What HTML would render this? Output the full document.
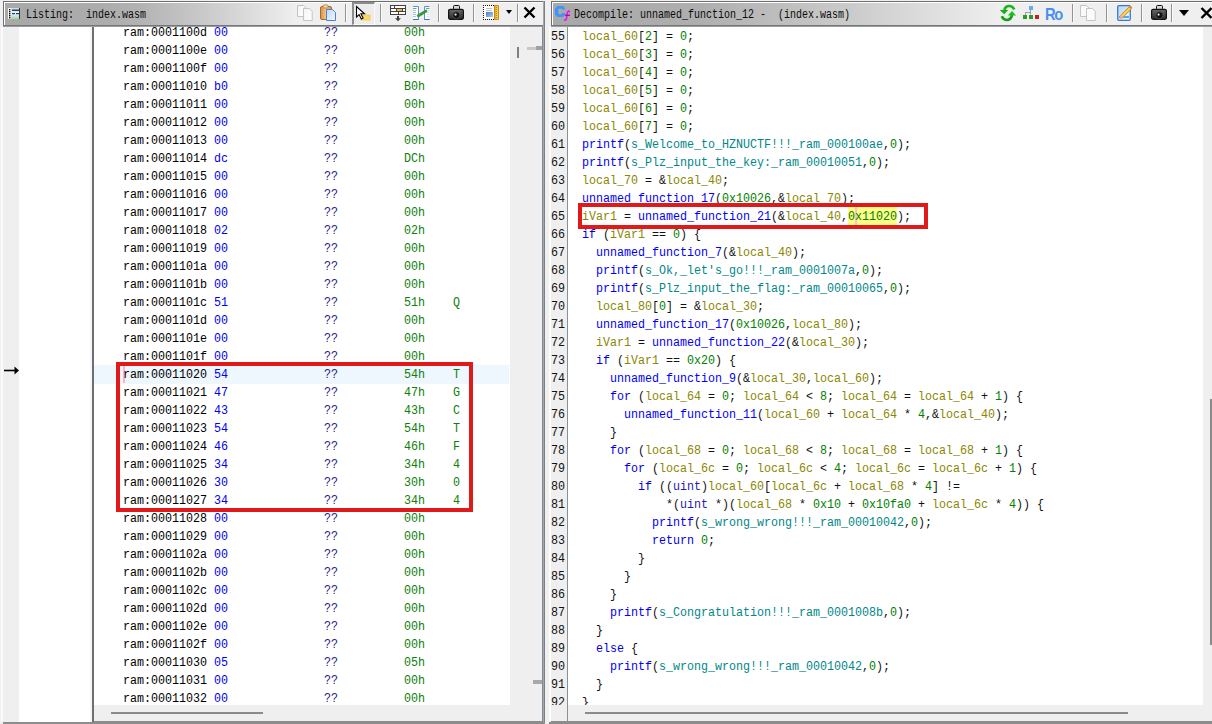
<!DOCTYPE html>
<html><head><meta charset="utf-8">
<style>
*{margin:0;padding:0;box-sizing:border-box}
html,body{width:1212px;height:724px;overflow:hidden;background:#f0f0f0;position:relative}
.abs{position:absolute}
/* title bars */
.tb{position:absolute;height:25px;border:1px solid #6f6f6f;border-bottom:none;}
.tbin{position:absolute;left:0;top:0;right:0;bottom:0;border-top:1px solid #fff;border-left:1px solid #fff}
.tt{position:absolute;top:0;font-family:"Liberation Mono",monospace;font-size:12px;line-height:24px;color:#0a0a0a;white-space:pre;transform:scaleX(0.8333);transform-origin:0 0}
.sep{position:absolute;top:4px;width:1px;height:18px;background:#939393;box-shadow:1px 0 0 #fbfbfb}
/* listing */
.lr{position:absolute;left:0;height:18px;width:510px}
.lr span{position:absolute;top:0;font-family:"Liberation Mono",monospace;font-size:12px;line-height:18px;white-space:pre;transform:scaleX(0.9722);transform-origin:0 0}
.ad{color:#000}
.by{color:#0000f0}
.mn{color:#26208c}
.op{color:#0c800c}
/* code */
.cr{position:absolute;height:18px;font-family:"Liberation Mono",monospace;font-size:12px;line-height:18px;white-space:pre;color:#111;transform:scaleX(0.9722);transform-origin:0 0}
.k{color:#0000e6}
.f{color:#0000ff}
.v{color:#8a8600}
.c{color:#008000}
.g{color:#008787}
.t{color:#2a1ab0}
.ln{position:absolute;left:551px;height:18px;font-family:"Liberation Mono",monospace;font-size:12px;line-height:18px;color:#111;white-space:pre;transform:scaleX(0.9722);transform-origin:0 0}
</style></head><body>

<!-- ================= LEFT PANEL (Listing) ================= -->
<!-- title bar -->
<div class="abs" style="left:3px;top:1px;width:542px;height:25px;background:linear-gradient(to right,#a8a8a8 0px,#acacac 97px,#b3b3b3 137px,#d0d0d0 217px,#eeeeee 290px,#efefef 290px,#efefef 100%);border-top:1px solid #6f6f6f;border-left:1px solid #6f6f6f;border-right:1px solid #6f6f6f"></div>
<div class="abs" style="left:4px;top:2px;width:540px;height:1px;background:#fff"></div>
<div class="abs" style="left:4px;top:2px;width:1px;height:23px;background:#fff"></div>
<div class="abs" style="left:3px;top:25px;width:542px;height:1px;background:#767676"></div><div class="abs" style="left:3px;top:26px;width:542px;height:1px;background:#9a9ea2"></div>
<!-- listing icon -->
<svg class="abs" style="left:8px;top:8px" width="12" height="11" viewBox="0 0 12 11">
<defs><linearGradient id="li" x1="0" y1="0" x2="0" y2="1"><stop offset="0" stop-color="#c8e8c8"/><stop offset="0.5" stop-color="#e8f4ff"/><stop offset="1" stop-color="#a8d0a8"/></linearGradient></defs>
<rect x="0" y="0" width="12" height="11" fill="url(#li)"/>
<rect x="0" y="0" width="3" height="11" fill="#fafafa"/>
<rect x="1" y="1" width="1.4" height="1.4" fill="#000"/><rect x="1" y="3" width="1.4" height="1.4" fill="#000"/><rect x="1" y="5" width="1.4" height="1.4" fill="#000"/><rect x="1" y="7" width="1.4" height="1.4" fill="#000"/><rect x="1" y="9" width="1.4" height="1.4" fill="#000"/>
<rect x="4" y="1.5" width="7" height="1.5" fill="#203a80"/>
<rect x="4" y="5" width="3" height="1.2" fill="#203a80"/><rect x="8" y="5" width="3" height="1.2" fill="#203a80"/>
<rect x="11" y="0" width="1" height="11" fill="#303830"/>
</svg>
<div class="tt" style="left:26px;top:3px">Listing:  index.wasm</div>

<!-- listing toolbar -->
<!-- copy (disabled) -->
<svg class="abs" style="left:295px;top:4px" width="20" height="18" viewBox="295 4 20 18">
<defs><linearGradient id="cp" x1="0" y1="0" x2="1" y2="1"><stop offset="0" stop-color="#f4f4f4"/><stop offset="1" stop-color="#ffffff"/></linearGradient></defs>
<path d="M297.5 5.5h6l2.5 2.5v8.5h-8.5z" fill="url(#cp)" stroke="#c4c4c4"/>
<path d="M303.5 8.5h6l2.7 2.7v9.3h-8.7z" fill="url(#cp)" stroke="#c4c4c4"/>
</svg>
<!-- paste -->
<svg class="abs" style="left:318px;top:4px" width="20" height="18" viewBox="318 4 20 18">
<defs><linearGradient id="clip" x1="0" y1="0" x2="1" y2="0"><stop offset="0" stop-color="#d89048"/><stop offset="0.5" stop-color="#f0c890"/><stop offset="1" stop-color="#d09050"/></linearGradient>
<linearGradient id="bp" x1="0" y1="0" x2="1" y2="1"><stop offset="0" stop-color="#c0d8f8"/><stop offset="1" stop-color="#f0f6ff"/></linearGradient></defs>
<rect x="320.5" y="6.5" width="11" height="13" rx="1.5" fill="url(#clip)" stroke="#a86a2a"/>
<rect x="323" y="5" width="5" height="3" rx="0.8" fill="#f8e0a0" stroke="#b07a30" stroke-width="0.8"/>
<path d="M326.5 9.5h6l3 3v8h-9z" fill="url(#bp)" stroke="#4a80d8"/>
</svg>
<div class="sep" style="left:345px"></div>
<!-- pressed pointer button -->
<div class="abs" style="left:352px;top:2px;width:23px;height:23px;background:#ececec;border-top:2px solid #8c8c8c;border-left:2px solid #8c8c8c;border-right:1px solid #fafafa;border-bottom:1px solid #fafafa"></div>
<svg class="abs" style="left:354px;top:4px" width="18" height="18" viewBox="354 4 18 18">
<rect x="361" y="15" width="9" height="5" fill="#ffd860" stroke="#f0c040" stroke-width="0.6"/>
<path d="M356.5 6.5v10.5l2.6-2.4 2.2 4.4 1.8-0.9-2.2-4.3h3.6z" fill="#fff" stroke="#000" stroke-width="1.1" stroke-linejoin="miter"/>
</svg>
<div class="sep" style="left:380px"></div>
<!-- table w/ arrow -->
<svg class="abs" style="left:388px;top:3px" width="20" height="20" viewBox="388 3 20 20">
<rect x="390" y="5" width="16" height="10" fill="#404040"/>
<rect x="391" y="6" width="3" height="2" fill="#fff"/><rect x="395" y="6" width="10" height="2" fill="#fff"/>
<rect x="391" y="9" width="5" height="2" fill="#fff"/><rect x="397" y="9" width="5" height="2" fill="#f8b840"/><rect x="403" y="9" width="2" height="2" fill="#fff"/>
<rect x="391" y="12" width="7" height="2" fill="#fff"/><rect x="399" y="12" width="6" height="2" fill="#fff"/>
<rect x="397" y="16" width="2" height="3" fill="#404040"/>
<path d="M395 18.2h6l-3 3z" fill="#404040"/>
</svg>
<!-- diff view -->
<svg class="abs" style="left:411px;top:4px" width="20" height="18" viewBox="411 4 20 18">
<path d="M413 6.5h5.5v13h-5.5" fill="#fff" stroke="#5a90d8" stroke-width="1"/>
<path d="M429.5 6.5h-5v13h5" fill="#fff" stroke="#5a90d8" stroke-width="1"/>
<path d="M413 19.5h5.5M424.5 19.5h5" stroke="#3a70c8" stroke-width="1"/>
<path d="M413 8.5h3.5M426 8.5h3.5" stroke="#60b060" stroke-width="1"/>
<path d="M413 10.5h3M413 12.5h3M413 14.5h3M413 16.5h3" stroke="#a8c4ec" stroke-width="1"/>
<path d="M427.5 10.5h1M427.5 12.5h1M427.5 14.5h1M427.5 16.5h1" stroke="#a8c4ec" stroke-width="1"/>
<path d="M418.3 15.8L425.8 11.2" stroke="#3a9a3a" stroke-width="3" stroke-linecap="round"/>
</svg>
<div class="sep" style="left:438px"></div>
<!-- camera -->
<svg class="abs" style="left:446px;top:3px" width="20" height="19" viewBox="446 3 20 19">
<defs><linearGradient id="cam" x1="0" y1="0" x2="0" y2="1"><stop offset="0" stop-color="#6a6a6a"/><stop offset="1" stop-color="#2a2a2a"/></linearGradient></defs>
<rect x="453.5" y="5.5" width="6" height="4" rx="1" fill="#d8d8d8" stroke="#111" stroke-width="1"/>
<rect x="448.6" y="9.3" width="14.8" height="10" rx="1.5" fill="url(#cam)" stroke="#111" stroke-width="1.2"/>
<circle cx="456.4" cy="15.3" r="3.6" fill="#111" stroke="#555" stroke-width="0.8"/>
<circle cx="455.6" cy="14.6" r="1.1" fill="#eee"/>
</svg>
<div class="sep" style="left:473px"></div>
<!-- snapshot/ruler icon -->
<svg class="abs" style="left:482px;top:4px" width="18" height="17" viewBox="482 4 18 17">
<rect x="483.5" y="5.5" width="11" height="14" fill="#fff"/>
<rect x="483" y="5" width="1" height="1" fill="#111"/><rect x="483" y="19" width="1" height="1" fill="#111"/><rect x="485" y="5" width="1" height="1" fill="#111"/><rect x="485" y="19" width="1" height="1" fill="#111"/><rect x="487" y="5" width="1" height="1" fill="#111"/><rect x="487" y="19" width="1" height="1" fill="#111"/><rect x="489" y="5" width="1" height="1" fill="#111"/><rect x="489" y="19" width="1" height="1" fill="#111"/><rect x="491" y="5" width="1" height="1" fill="#111"/><rect x="491" y="19" width="1" height="1" fill="#111"/><rect x="493" y="5" width="1" height="1" fill="#111"/><rect x="493" y="19" width="1" height="1" fill="#111"/><rect x="483" y="7" width="1" height="1" fill="#111"/><rect x="483" y="9" width="1" height="1" fill="#111"/><rect x="483" y="11" width="1" height="1" fill="#111"/><rect x="483" y="13" width="1" height="1" fill="#111"/><rect x="483" y="15" width="1" height="1" fill="#111"/><rect x="483" y="17" width="1" height="1" fill="#111"/>
<path d="M486 8.5h6M486 10.5h6" stroke="#bbb" stroke-width="0.9"/>
<defs><linearGradient id="img" x1="0" y1="0" x2="1" y2="1"><stop offset="0" stop-color="#3a80d8"/><stop offset="1" stop-color="#b8c8d8"/></linearGradient></defs>
<rect x="486" y="12" width="7" height="5" fill="url(#img)"/>
<rect x="494" y="5" width="5" height="15" rx="1" fill="#d08a10"/>
<rect x="495.5" y="6" width="2.5" height="13" fill="#f0d050"/>
<path d="M496 7.5h1M496 9.5h1M496 11.5h1M496 13.5h1M496 15.5h1M496 17.5h1" stroke="#b07000" stroke-width="0.8"/>
</svg>
<svg class="abs" style="left:506px;top:10px" width="6" height="4" viewBox="0 0 6 4"><path d="M0 0h6L3 4z" fill="#000"/></svg>
<div class="sep" style="left:517px"></div>
<svg class="abs" style="left:523px;top:6px" width="13" height="13" viewBox="0 0 13 13"><path d="M1.5 1.5L11.5 11.5M11.5 1.5L1.5 11.5" stroke="#000" stroke-width="2.4"/></svg>

<!-- listing body -->
<div class="abs" style="left:3px;top:27px;width:16px;height:695px;background:#efefef"></div>
<div class="abs" style="left:1px;top:27px;width:2px;height:694px;background:#fafafa"></div>
<div class="abs" style="left:19px;top:27px;width:73px;height:695px;background:#fff"></div>
<div class="abs" style="left:90px;top:27px;width:2px;height:695px;background:#f6f6f6"></div>
<div class="abs" style="left:92px;top:27px;width:2px;height:695px;background:#6c7075"></div>
<div class="abs" style="left:94px;top:27px;width:416px;height:678px;background:#fff;overflow:hidden">
  <div class="abs" style="left:0;top:0;width:416px;height:678px;">
  </div>
</div>
<!-- listing rows (absolute page coords) -->
<div class="abs" style="left:0;top:27px;width:510px;height:678px;overflow:hidden">
 <div class="abs" style="left:0;top:-27px;width:510px;height:724px">
  <div class="abs" style="left:94px;top:365px;width:415px;height:19px;background:#eef6fe"></div>
  <div class="abs" style="left:123px;top:366px;width:2px;height:17px;background:#ffb4c4"></div>
<div class="lr" style="top:24px"><span class="ad" style="left:123px">ram:0001100d</span><span class="by" style="left:214px">00</span><span class="mn" style="left:324px">??</span><span class="op" style="left:404px">00h</span></div>
<div class="lr" style="top:42px"><span class="ad" style="left:123px">ram:0001100e</span><span class="by" style="left:214px">00</span><span class="mn" style="left:324px">??</span><span class="op" style="left:404px">00h</span></div>
<div class="lr" style="top:60px"><span class="ad" style="left:123px">ram:0001100f</span><span class="by" style="left:214px">00</span><span class="mn" style="left:324px">??</span><span class="op" style="left:404px">00h</span></div>
<div class="lr" style="top:78px"><span class="ad" style="left:123px">ram:00011010</span><span class="by" style="left:214px">b0</span><span class="mn" style="left:324px">??</span><span class="op" style="left:404px">B0h</span></div>
<div class="lr" style="top:96px"><span class="ad" style="left:123px">ram:00011011</span><span class="by" style="left:214px">00</span><span class="mn" style="left:324px">??</span><span class="op" style="left:404px">00h</span></div>
<div class="lr" style="top:114px"><span class="ad" style="left:123px">ram:00011012</span><span class="by" style="left:214px">00</span><span class="mn" style="left:324px">??</span><span class="op" style="left:404px">00h</span></div>
<div class="lr" style="top:132px"><span class="ad" style="left:123px">ram:00011013</span><span class="by" style="left:214px">00</span><span class="mn" style="left:324px">??</span><span class="op" style="left:404px">00h</span></div>
<div class="lr" style="top:150px"><span class="ad" style="left:123px">ram:00011014</span><span class="by" style="left:214px">dc</span><span class="mn" style="left:324px">??</span><span class="op" style="left:404px">DCh</span></div>
<div class="lr" style="top:168px"><span class="ad" style="left:123px">ram:00011015</span><span class="by" style="left:214px">00</span><span class="mn" style="left:324px">??</span><span class="op" style="left:404px">00h</span></div>
<div class="lr" style="top:186px"><span class="ad" style="left:123px">ram:00011016</span><span class="by" style="left:214px">00</span><span class="mn" style="left:324px">??</span><span class="op" style="left:404px">00h</span></div>
<div class="lr" style="top:204px"><span class="ad" style="left:123px">ram:00011017</span><span class="by" style="left:214px">00</span><span class="mn" style="left:324px">??</span><span class="op" style="left:404px">00h</span></div>
<div class="lr" style="top:222px"><span class="ad" style="left:123px">ram:00011018</span><span class="by" style="left:214px">02</span><span class="mn" style="left:324px">??</span><span class="op" style="left:404px">02h</span></div>
<div class="lr" style="top:240px"><span class="ad" style="left:123px">ram:00011019</span><span class="by" style="left:214px">00</span><span class="mn" style="left:324px">??</span><span class="op" style="left:404px">00h</span></div>
<div class="lr" style="top:258px"><span class="ad" style="left:123px">ram:0001101a</span><span class="by" style="left:214px">00</span><span class="mn" style="left:324px">??</span><span class="op" style="left:404px">00h</span></div>
<div class="lr" style="top:276px"><span class="ad" style="left:123px">ram:0001101b</span><span class="by" style="left:214px">00</span><span class="mn" style="left:324px">??</span><span class="op" style="left:404px">00h</span></div>
<div class="lr" style="top:294px"><span class="ad" style="left:123px">ram:0001101c</span><span class="by" style="left:214px">51</span><span class="mn" style="left:324px">??</span><span class="op" style="left:404px">51h</span><span class="op" style="left:453px">Q</span></div>
<div class="lr" style="top:312px"><span class="ad" style="left:123px">ram:0001101d</span><span class="by" style="left:214px">00</span><span class="mn" style="left:324px">??</span><span class="op" style="left:404px">00h</span></div>
<div class="lr" style="top:330px"><span class="ad" style="left:123px">ram:0001101e</span><span class="by" style="left:214px">00</span><span class="mn" style="left:324px">??</span><span class="op" style="left:404px">00h</span></div>
<div class="lr" style="top:348px"><span class="ad" style="left:123px">ram:0001101f</span><span class="by" style="left:214px">00</span><span class="mn" style="left:324px">??</span><span class="op" style="left:404px">00h</span></div>
<div class="lr" style="top:366px"><span class="ad" style="left:123px">ram:00011020</span><span class="by" style="left:214px">54</span><span class="mn" style="left:324px">??</span><span class="op" style="left:404px">54h</span><span class="op" style="left:453px">T</span></div>
<div class="lr" style="top:384px"><span class="ad" style="left:123px">ram:00011021</span><span class="by" style="left:214px">47</span><span class="mn" style="left:324px">??</span><span class="op" style="left:404px">47h</span><span class="op" style="left:453px">G</span></div>
<div class="lr" style="top:402px"><span class="ad" style="left:123px">ram:00011022</span><span class="by" style="left:214px">43</span><span class="mn" style="left:324px">??</span><span class="op" style="left:404px">43h</span><span class="op" style="left:453px">C</span></div>
<div class="lr" style="top:420px"><span class="ad" style="left:123px">ram:00011023</span><span class="by" style="left:214px">54</span><span class="mn" style="left:324px">??</span><span class="op" style="left:404px">54h</span><span class="op" style="left:453px">T</span></div>
<div class="lr" style="top:438px"><span class="ad" style="left:123px">ram:00011024</span><span class="by" style="left:214px">46</span><span class="mn" style="left:324px">??</span><span class="op" style="left:404px">46h</span><span class="op" style="left:453px">F</span></div>
<div class="lr" style="top:456px"><span class="ad" style="left:123px">ram:00011025</span><span class="by" style="left:214px">34</span><span class="mn" style="left:324px">??</span><span class="op" style="left:404px">34h</span><span class="op" style="left:453px">4</span></div>
<div class="lr" style="top:474px"><span class="ad" style="left:123px">ram:00011026</span><span class="by" style="left:214px">30</span><span class="mn" style="left:324px">??</span><span class="op" style="left:404px">30h</span><span class="op" style="left:453px">0</span></div>
<div class="lr" style="top:492px"><span class="ad" style="left:123px">ram:00011027</span><span class="by" style="left:214px">34</span><span class="mn" style="left:324px">??</span><span class="op" style="left:404px">34h</span><span class="op" style="left:453px">4</span></div>
<div class="lr" style="top:510px"><span class="ad" style="left:123px">ram:00011028</span><span class="by" style="left:214px">00</span><span class="mn" style="left:324px">??</span><span class="op" style="left:404px">00h</span></div>
<div class="lr" style="top:528px"><span class="ad" style="left:123px">ram:00011029</span><span class="by" style="left:214px">00</span><span class="mn" style="left:324px">??</span><span class="op" style="left:404px">00h</span></div>
<div class="lr" style="top:546px"><span class="ad" style="left:123px">ram:0001102a</span><span class="by" style="left:214px">00</span><span class="mn" style="left:324px">??</span><span class="op" style="left:404px">00h</span></div>
<div class="lr" style="top:564px"><span class="ad" style="left:123px">ram:0001102b</span><span class="by" style="left:214px">00</span><span class="mn" style="left:324px">??</span><span class="op" style="left:404px">00h</span></div>
<div class="lr" style="top:582px"><span class="ad" style="left:123px">ram:0001102c</span><span class="by" style="left:214px">00</span><span class="mn" style="left:324px">??</span><span class="op" style="left:404px">00h</span></div>
<div class="lr" style="top:600px"><span class="ad" style="left:123px">ram:0001102d</span><span class="by" style="left:214px">00</span><span class="mn" style="left:324px">??</span><span class="op" style="left:404px">00h</span></div>
<div class="lr" style="top:618px"><span class="ad" style="left:123px">ram:0001102e</span><span class="by" style="left:214px">00</span><span class="mn" style="left:324px">??</span><span class="op" style="left:404px">00h</span></div>
<div class="lr" style="top:636px"><span class="ad" style="left:123px">ram:0001102f</span><span class="by" style="left:214px">00</span><span class="mn" style="left:324px">??</span><span class="op" style="left:404px">00h</span></div>
<div class="lr" style="top:654px"><span class="ad" style="left:123px">ram:00011030</span><span class="by" style="left:214px">05</span><span class="mn" style="left:324px">??</span><span class="op" style="left:404px">05h</span></div>
<div class="lr" style="top:672px"><span class="ad" style="left:123px">ram:00011031</span><span class="by" style="left:214px">00</span><span class="mn" style="left:324px">??</span><span class="op" style="left:404px">00h</span></div>
<div class="lr" style="top:690px"><span class="ad" style="left:123px">ram:00011032</span><span class="by" style="left:214px">00</span><span class="mn" style="left:324px">??</span><span class="op" style="left:404px">00h</span></div>
 </div>
</div>
<!-- arrow -->
<svg class="abs" style="left:3px;top:365px" width="17" height="11" viewBox="0 0 17 11"><path d="M1 5.5h11" stroke="#000" stroke-width="1.6"/><path d="M11.5 1.5L16 5.5 11.5 9.5z" fill="#000"/></svg>
<!-- listing red box -->
<div class="abs" style="left:116px;top:362px;width:357px;height:150px;border:4px solid #e01a1a"></div>
<!-- listing vertical scrollbar area -->
<div class="abs" style="left:510px;top:27px;width:32px;height:678px;background:#efefef"></div>
<div class="abs" style="left:517px;top:47px;width:2px;height:11px;background:#808080"></div>
<div class="abs" style="left:527px;top:47px;width:9px;height:3px;background:#c8c8c8"></div>
<div class="abs" style="left:536px;top:46px;width:6px;height:4px;background:#a0a0a0"></div>
<div class="abs" style="left:533px;top:680px;width:9px;height:4px;background:#a8a8a8"></div>
<!-- listing horizontal scrollbar -->
<div class="abs" style="left:94px;top:705px;width:448px;height:16px;background:#efefef"></div>
<div class="abs" style="left:111px;top:712px;width:152px;height:2px;background:#8a8a8a"></div>
<!-- listing borders -->
<div class="abs" style="left:542px;top:27px;width:1px;height:695px;background:#858b92"></div><div class="abs" style="left:543px;top:1px;width:1px;height:722px;background:#a4a8ac"></div>
<div class="abs" style="left:544px;top:1px;width:1px;height:722px;background:#7a8088"></div>
<div class="abs" style="left:94px;top:721px;width:449px;height:1px;background:#868c92"></div>
<div class="abs" style="left:3px;top:722px;width:542px;height:2px;background:#8c8c8c"></div>

<!-- ================= RIGHT PANEL (Decompile) ================= -->
<div class="abs" style="left:551px;top:1px;width:661px;height:25px;background:linear-gradient(to right,#a8a8a8 0px,#afafaf 149px,#cbcbcb 299px,#eeeeee 446px,#efefef 446px,#efefef 100%);border-top:1px solid #6f6f6f;border-left:1px solid #6f6f6f"></div>
<div class="abs" style="left:552px;top:2px;width:660px;height:1px;background:#fff"></div>
<div class="abs" style="left:552px;top:2px;width:1px;height:23px;background:#fff"></div>
<div class="abs" style="left:551px;top:25px;width:661px;height:1px;background:#767676"></div><div class="abs" style="left:551px;top:26px;width:661px;height:1px;background:#9a9ea2"></div>
<!-- Cf icon -->
<svg class="abs" style="left:553px;top:4px" width="20" height="18" viewBox="553 4 20 18">
<path d="M557.5 6L563 6 565 8 565 9.6 562 9.6 561.5 8.8 559 8.8 558.3 9.6 558.3 13.3 559 14.2 561.5 14.2 562 13 565 13 565 15 563 17 557.5 17 555 14.5 555 8.5z" fill="#3a96ff"/>
<path d="M569.8 11.8C568.5 10.5 567.5 11.5 567.3 13L566.5 18.5C566.3 20 565 20.5 564.2 19.5" fill="none" stroke="#ee10ee" stroke-width="1.7"/>
<path d="M565 15.3h5" stroke="#b000b0" stroke-width="1.3"/>
</svg>
<div class="tt" style="left:574px;top:3px">Decompile: unnamed_function_12 -  (index.wasm)</div>
<!-- decompile toolbar -->
<svg class="abs" style="left:996px;top:2px" width="22" height="22" viewBox="996 2 22 22">
<defs><linearGradient id="gg" x1="0" y1="0" x2="0" y2="1"><stop offset="0" stop-color="#40e040"/><stop offset="1" stop-color="#0a8a0a"/></linearGradient></defs>
<path d="M1014.3 9.6C1012.5 5.5 1007 4.5 1004.8 8.6L1004.6 10.2" fill="none" stroke="#18b818" stroke-width="2.6"/>
<path d="M999.8 10L1008.3 10 1004.2 14.3z" fill="#14b014"/>
<path d="M1001.8 16.3C1003.6 20.8 1009.5 21.5 1011.5 16.8L1011.8 15" fill="none" stroke="#10a010" stroke-width="2.6"/>
<path d="M1007.8 15.4L1016 15.6 1012 11z" fill="#18c018"/>
</svg>
<svg class="abs" style="left:1022px;top:5px" width="18" height="15" viewBox="1022 5 18 15">
<path d="M1030.5 10v4.5M1025 12.5h6M1025.5 12.5v2.5" stroke="#a0a0a0" stroke-width="1"/>
<rect x="1029" y="6" width="4" height="4" fill="#6aa8f0"/>
<rect x="1023" y="15" width="4" height="4" fill="#2a9a2a"/>
<rect x="1029" y="15" width="4" height="4" fill="#2a9a2a"/>
<rect x="1035" y="15" width="4" height="4" fill="#c82020"/>
</svg>
<div class="abs" style="left:1045px;top:4px;font-family:'Liberation Sans',sans-serif;font-size:16px;font-weight:bold;line-height:20px;color:#4a90f0;letter-spacing:-1.5px;transform:scale(0.92,1.05);transform-origin:0 0">Ro</div>
<div class="sep" style="left:1072px"></div>
<svg class="abs" style="left:1078px;top:4px" width="20" height="18" viewBox="295 4 20 18">
<path d="M297.5 5.5h6l2.5 2.5v8.5h-8.5z" fill="#fafafa" stroke="#c4c4c4"/>
<path d="M303.5 8.5h6l2.7 2.7v9.3h-8.7z" fill="#fcfcfc" stroke="#c4c4c4"/>
</svg>
<div class="sep" style="left:1106px"></div>
<svg class="abs" style="left:1116px;top:4px" width="18" height="18" viewBox="1116 4 18 18">
<defs><linearGradient id="pg" x1="0" y1="0" x2="1" y2="1"><stop offset="0" stop-color="#b8d4f8"/><stop offset="1" stop-color="#f0f6fe"/></linearGradient></defs>
<rect x="1117.7" y="5.7" width="12.6" height="14.6" rx="1.2" fill="url(#pg)" stroke="#3a78d0" stroke-width="1.3"/>
<rect x="1119" y="16" width="10" height="2" fill="#50aaf0"/>
<path d="M1121.3 16.8L1130.3 7.8" stroke="#d08a30" stroke-width="3.6" stroke-linecap="round"/>
<path d="M1121.6 16.5L1130 8.1" stroke="#f4dc50" stroke-width="2"/>
<path d="M1120.5 17.6L1122.3 15.8" stroke="#f0b080" stroke-width="3"/>
</svg>
<div class="sep" style="left:1141px"></div>
<svg class="abs" style="left:1149px;top:3px" width="20" height="19" viewBox="446 3 20 19">
<defs><linearGradient id="cam2" x1="0" y1="0" x2="0" y2="1"><stop offset="0" stop-color="#6a6a6a"/><stop offset="1" stop-color="#2a2a2a"/></linearGradient></defs>
<rect x="453.5" y="5.5" width="6" height="4" rx="1" fill="#d8d8d8" stroke="#111" stroke-width="1"/>
<rect x="448.6" y="9.3" width="14.8" height="10" rx="1.5" fill="url(#cam2)" stroke="#111" stroke-width="1.2"/>
<circle cx="456.4" cy="15.3" r="3.6" fill="#111" stroke="#555" stroke-width="0.8"/>
<circle cx="455.6" cy="14.6" r="1.1" fill="#eee"/>
</svg>
<div class="sep" style="left:1171px"></div>
<svg class="abs" style="left:1179px;top:10px" width="10" height="6" viewBox="0 0 10 6"><path d="M0 0h10L5 6z" fill="#000"/></svg>
<svg class="abs" style="left:1200px;top:7px" width="13" height="12" viewBox="0 0 13 12"><path d="M1.5 1L11.5 11M11.5 1L1.5 11" stroke="#000" stroke-width="2.4"/></svg>

<!-- decompile body -->
<div class="abs" style="left:549px;top:27px;width:2px;height:694px;background:#fcfcfc"></div>
<div class="abs" style="left:551px;top:27px;width:16px;height:694px;background:#efefef"></div>
<div class="abs" style="left:567px;top:27px;width:1px;height:694px;background:#8a9096"></div>
<div class="abs" style="left:568px;top:27px;width:635px;height:678px;background:#fff"></div>
<div class="abs" style="left:1203px;top:27px;width:9px;height:678px;background:#efefef"></div>
<div class="abs" style="left:1210px;top:399px;width:2px;height:246px;background:#8a8a8a"></div>
<div class="abs" style="left:568px;top:705px;width:644px;height:16px;background:#efefef"></div>
<div class="abs" style="left:585px;top:712px;width:543px;height:2px;background:#8a8a8a"></div>
<div class="abs" style="left:551px;top:721px;width:661px;height:1px;background:#868c92"></div>
<div class="abs" style="left:549px;top:722px;width:663px;height:2px;background:#8c8c8c"></div>
<!-- code area clip -->
<div class="abs" style="left:551px;top:27px;width:652px;height:678px;overflow:hidden">
 <div class="abs" style="left:-551px;top:-27px;width:1212px;height:724px">
  <div class="abs" style="left:848px;top:207px;width:49px;height:18px;background:#fdfd8a"></div>
  <div class="abs" style="left:855px;top:207px;width:2px;height:18px;background:#ffc0cc"></div>
<div class="ln" style="top:28px">55</div>
<div class="ln" style="top:46px">56</div>
<div class="ln" style="top:64px">57</div>
<div class="ln" style="top:82px">58</div>
<div class="ln" style="top:100px">59</div>
<div class="ln" style="top:118px">60</div>
<div class="ln" style="top:136px">61</div>
<div class="ln" style="top:154px">62</div>
<div class="ln" style="top:172px">63</div>
<div class="ln" style="top:190px">64</div>
<div class="ln" style="top:208px">65</div>
<div class="ln" style="top:226px">66</div>
<div class="ln" style="top:244px">67</div>
<div class="ln" style="top:262px">68</div>
<div class="ln" style="top:280px">69</div>
<div class="ln" style="top:298px">70</div>
<div class="ln" style="top:316px">71</div>
<div class="ln" style="top:334px">72</div>
<div class="ln" style="top:352px">73</div>
<div class="ln" style="top:370px">74</div>
<div class="ln" style="top:388px">75</div>
<div class="ln" style="top:406px">76</div>
<div class="ln" style="top:424px">77</div>
<div class="ln" style="top:442px">78</div>
<div class="ln" style="top:460px">79</div>
<div class="ln" style="top:478px">80</div>
<div class="ln" style="top:496px">81</div>
<div class="ln" style="top:514px">82</div>
<div class="ln" style="top:532px">83</div>
<div class="ln" style="top:550px">84</div>
<div class="ln" style="top:568px">85</div>
<div class="ln" style="top:586px">86</div>
<div class="ln" style="top:604px">87</div>
<div class="ln" style="top:622px">88</div>
<div class="ln" style="top:640px">89</div>
<div class="ln" style="top:658px">90</div>
<div class="ln" style="top:676px">91</div>
<div class="ln" style="top:694px">92</div>
<div class="cr" style="top:28px;left:582px"><span class="v">local_60</span>[<span class="c">2</span>] = <span class="c">0</span>;</div>
<div class="cr" style="top:46px;left:582px"><span class="v">local_60</span>[<span class="c">3</span>] = <span class="c">0</span>;</div>
<div class="cr" style="top:64px;left:582px"><span class="v">local_60</span>[<span class="c">4</span>] = <span class="c">0</span>;</div>
<div class="cr" style="top:82px;left:582px"><span class="v">local_60</span>[<span class="c">5</span>] = <span class="c">0</span>;</div>
<div class="cr" style="top:100px;left:582px"><span class="v">local_60</span>[<span class="c">6</span>] = <span class="c">0</span>;</div>
<div class="cr" style="top:118px;left:582px"><span class="v">local_60</span>[<span class="c">7</span>] = <span class="c">0</span>;</div>
<div class="cr" style="top:136px;left:582px"><span class="f">printf</span>(<span class="g">s_Welcome_to_HZNUCTF!!!_ram_000100ae</span>,<span class="c">0</span>);</div>
<div class="cr" style="top:154px;left:582px"><span class="f">printf</span>(<span class="g">s_Plz_input_the_key:_ram_00010051</span>,<span class="c">0</span>);</div>
<div class="cr" style="top:172px;left:582px"><span class="v">local_70</span> = &amp;<span class="v">local_40</span>;</div>
<div class="cr" style="top:190px;left:582px"><span class="f">unnamed_function_17</span>(<span class="c">0x10026</span>,&amp;<span class="v">local_70</span>);</div>
<div class="cr" style="top:208px;left:582px"><span class="v">iVar1</span> = <span class="f">unnamed_function_21</span>(&amp;<span class="v">local_40</span>,<span class="c">0x11020</span>);</div>
<div class="cr" style="top:226px;left:582px"><span class="k">if</span> (<span class="v">iVar1</span> == <span class="c">0</span>) {</div>
<div class="cr" style="top:244px;left:596px"><span class="f">unnamed_function_7</span>(&amp;<span class="v">local_40</span>);</div>
<div class="cr" style="top:262px;left:596px"><span class="f">printf</span>(<span class="g">s_Ok,_let&#x27;s_go!!!_ram_0001007a</span>,<span class="c">0</span>);</div>
<div class="cr" style="top:280px;left:596px"><span class="f">printf</span>(<span class="g">s_Plz_input_the_flag:_ram_00010065</span>,<span class="c">0</span>);</div>
<div class="cr" style="top:298px;left:596px"><span class="v">local_80</span>[<span class="c">0</span>] = &amp;<span class="v">local_30</span>;</div>
<div class="cr" style="top:316px;left:596px"><span class="f">unnamed_function_17</span>(<span class="c">0x10026</span>,<span class="v">local_80</span>);</div>
<div class="cr" style="top:334px;left:596px"><span class="v">iVar1</span> = <span class="f">unnamed_function_22</span>(&amp;<span class="v">local_30</span>);</div>
<div class="cr" style="top:352px;left:596px"><span class="k">if</span> (<span class="v">iVar1</span> == <span class="c">0x20</span>) {</div>
<div class="cr" style="top:370px;left:610px"><span class="f">unnamed_function_9</span>(&amp;<span class="v">local_30</span>,<span class="v">local_60</span>);</div>
<div class="cr" style="top:388px;left:610px"><span class="k">for</span> (<span class="v">local_64</span> = <span class="c">0</span>; <span class="v">local_64</span> &lt; <span class="c">8</span>; <span class="v">local_64</span> = <span class="v">local_64</span> + <span class="c">1</span>) {</div>
<div class="cr" style="top:406px;left:624px"><span class="f">unnamed_function_11</span>(<span class="v">local_60</span> + <span class="v">local_64</span> * <span class="c">4</span>,&amp;<span class="v">local_40</span>);</div>
<div class="cr" style="top:424px;left:610px">}</div>
<div class="cr" style="top:442px;left:610px"><span class="k">for</span> (<span class="v">local_68</span> = <span class="c">0</span>; <span class="v">local_68</span> &lt; <span class="c">8</span>; <span class="v">local_68</span> = <span class="v">local_68</span> + <span class="c">1</span>) {</div>
<div class="cr" style="top:460px;left:624px"><span class="k">for</span> (<span class="v">local_6c</span> = <span class="c">0</span>; <span class="v">local_6c</span> &lt; <span class="c">4</span>; <span class="v">local_6c</span> = <span class="v">local_6c</span> + <span class="c">1</span>) {</div>
<div class="cr" style="top:478px;left:638px"><span class="k">if</span> ((<span class="t">uint</span>)<span class="v">local_60</span>[<span class="v">local_6c</span> + <span class="v">local_68</span> * <span class="c">4</span>] !=</div>
<div class="cr" style="top:496px;left:666px">*(<span class="t">uint</span> *)(<span class="v">local_68</span> * <span class="c">0x10</span> + <span class="c">0x10fa0</span> + <span class="v">local_6c</span> * <span class="c">4</span>)) {</div>
<div class="cr" style="top:514px;left:652px"><span class="f">printf</span>(<span class="g">s_wrong_wrong!!!_ram_00010042</span>,<span class="c">0</span>);</div>
<div class="cr" style="top:532px;left:652px"><span class="k">return</span> <span class="c">0</span>;</div>
<div class="cr" style="top:550px;left:638px">}</div>
<div class="cr" style="top:568px;left:624px">}</div>
<div class="cr" style="top:586px;left:610px">}</div>
<div class="cr" style="top:604px;left:610px"><span class="f">printf</span>(<span class="g">s_Congratulation!!!_ram_0001008b</span>,<span class="c">0</span>);</div>
<div class="cr" style="top:622px;left:596px">}</div>
<div class="cr" style="top:640px;left:596px"><span class="k">else</span> {</div>
<div class="cr" style="top:658px;left:610px"><span class="f">printf</span>(<span class="g">s_wrong_wrong!!!_ram_00010042</span>,<span class="c">0</span>);</div>
<div class="cr" style="top:676px;left:596px">}</div>
<div class="cr" style="top:694px;left:582px">}</div>
 </div>
</div>
<!-- decompile red box -->
<div class="abs" style="left:578px;top:203px;width:350px;height:26px;border:4px solid #e01a1a"></div>

</body></html>
